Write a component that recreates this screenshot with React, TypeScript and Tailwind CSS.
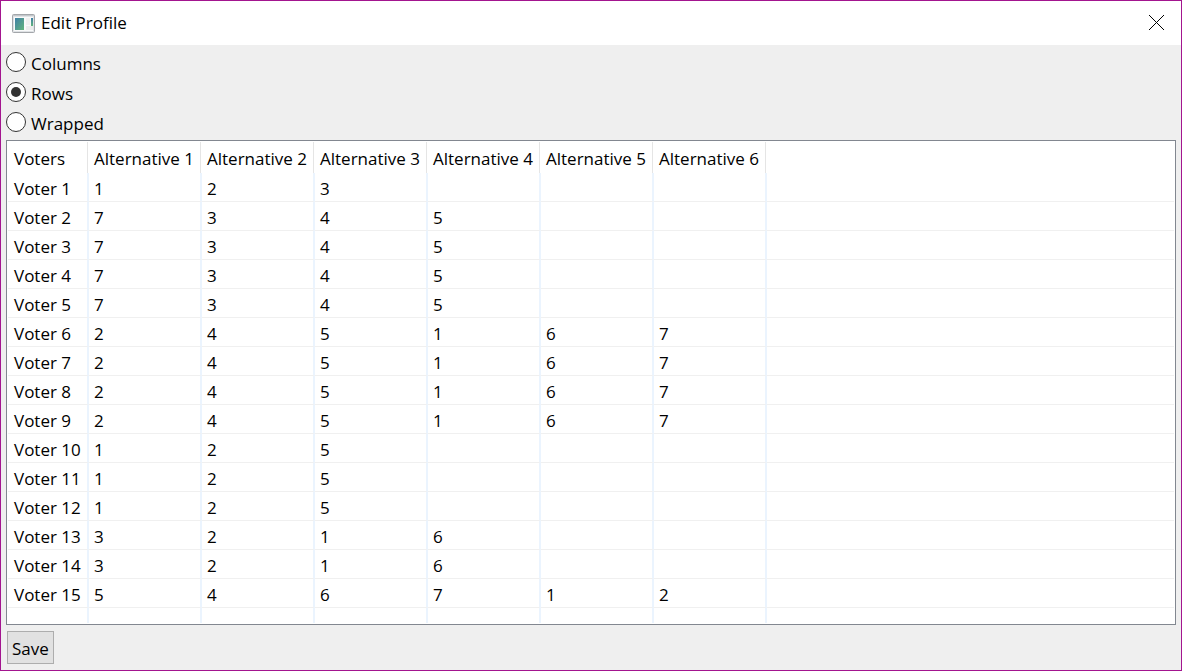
import { useState } from "react";

const layouts = ["Columns", "Rows", "Wrapped"];

const alternatives = [1, 2, 3, 4, 5, 6];

const rankings: number[][] = [
  [1, 2, 3],
  [7, 3, 4, 5],
  [7, 3, 4, 5],
  [7, 3, 4, 5],
  [7, 3, 4, 5],
  [2, 4, 5, 1, 6, 7],
  [2, 4, 5, 1, 6, 7],
  [2, 4, 5, 1, 6, 7],
  [2, 4, 5, 1, 6, 7],
  [1, 2, 5],
  [1, 2, 5],
  [1, 2, 5],
  [3, 2, 1, 6],
  [3, 2, 1, 6],
  [5, 4, 6, 7, 1, 2],
];

function AppIcon() {
  return (
    <svg width="23" height="19" viewBox="0 0 23 19" aria-hidden="true">
      <defs>
        <linearGradient id="pane" x1="0" y1="0" x2="1" y2="1">
          <stop offset="0" stopColor="#3f7fa6" />
          <stop offset="1" stopColor="#62b57c" />
        </linearGradient>
        <linearGradient id="bar" x1="0" y1="0" x2="0" y2="1">
          <stop offset="0" stopColor="#3f7fa6" />
          <stop offset="1" stopColor="#62b57c" />
        </linearGradient>
      </defs>
      <rect x="0.5" y="0.5" width="22" height="18" rx="1" fill="#dfe2e5" stroke="#a3a6aa" />
      <rect x="1" y="1" width="21" height="1" fill="#c3c7cb" />
      <rect x="2" y="3" width="19" height="14" fill="#f9fafa" />
      <rect x="3" y="4" width="9" height="12" fill="url(#pane)" />
      <rect x="14" y="4" width="4" height="7" fill="#f0f0f0" />
      <rect x="14" y="12" width="7" height="4" fill="#ececec" />
      <rect x="19" y="4" width="2" height="8" fill="url(#bar)" />
    </svg>
  );
}

export default function App() {
  const [layout, setLayout] = useState("Rows");

  return (
    <main className="flex min-h-screen flex-col border border-[#a3158f] bg-[#efefef] font-['Open_Sans','Noto_Sans',sans-serif] text-[17px] leading-6 text-black">
      <header className="flex h-11 items-center bg-white pr-4 pl-[11px]">
        <AppIcon />
        <h1 className="ml-[6px] flex-1">Edit Profile</h1>
        <button type="button" aria-label="Close" className="pb-[2px]">
          <svg width="17" height="17" viewBox="0 0 17 17" stroke="#000" strokeWidth="1" aria-hidden="true">
            <path d="M1 1 16 16M16 1 1 16" />
          </svg>
        </button>
      </header>

      <div className="flex flex-1 flex-col px-[5px] pt-[2px] pb-[6px]">
        <fieldset>
          {layouts.map((name) => (
            <label key={name} className="flex h-[30px] w-fit items-center gap-[5px]">
              <input
                type="radio"
                name="layout"
                checked={layout === name}
                onChange={() => setLayout(name)}
                className="grid size-5 appearance-none place-items-center rounded-full border border-[#333333] bg-white before:size-[10px] before:rounded-full checked:before:bg-[#333333]"
              />
              <span className="pt-1">{name}</span>
            </label>
          ))}
        </fieldset>

        <div className="mt-[3px] flex-1 border border-[#828790] bg-white p-px">
          <table className="w-full table-fixed border-separate border-spacing-0 text-left">
            <colgroup>
              <col className="w-[81px]" />
              {alternatives.map((n) => (
                <col key={n} className="w-[113px]" />
              ))}
              <col />
            </colgroup>
            <thead>
              <tr>
                <th className="p-0 font-normal whitespace-nowrap">
                  <div className="mr-px h-[31px] border-r border-[#e5e5e5] pt-[5px] pl-[6px]">Voters</div>
                </th>
                {alternatives.map((n) => (
                  <th key={n} className="p-0 font-normal whitespace-nowrap">
                    <div className="mr-px h-[31px] border-r border-[#e5e5e5] pt-[5px] pl-[5px]">Alternative {n}</div>
                  </th>
                ))}
                <td />
              </tr>
            </thead>
            <tbody>
              {rankings.map((ranking, i) => (
                <tr key={i} className="h-[29px]">
                  <td className="border-r-2 border-b border-r-[#ebf4fe] border-b-[#f0f0f0] p-0 pt-1 pl-[6px] whitespace-nowrap">
                    Voter {i + 1}
                  </td>
                  {alternatives.map((n) => (
                    <td key={n} className="border-r-2 border-b border-r-[#ebf4fe] border-b-[#f0f0f0] p-0 pt-1 pl-[5px]">
                      {ranking[n - 1]}
                    </td>
                  ))}
                  <td className="border-b border-[#f0f0f0] p-0" />
                </tr>
              ))}
              <tr className="h-[15px]">
                <td className="border-r-2 border-[#ebf4fe] p-0" />
                {alternatives.map((n) => (
                  <td key={n} className="border-r-2 border-[#ebf4fe] p-0" />
                ))}
                <td className="p-0" />
              </tr>
            </tbody>
          </table>
        </div>

        <button
          type="button"
          className="mt-[6px] ml-px h-[33px] w-fit border border-[#adadad] bg-[#e1e1e1] px-1 pt-[2px]"
        >
          Save
        </button>
      </div>
    </main>
  );
}
